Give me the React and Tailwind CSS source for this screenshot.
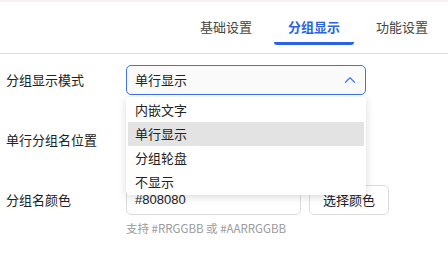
import { ChevronUp } from 'lucide-react';

const TABS = ['基础设置', '分组显示', '功能设置'];
const MODES = ['内嵌文字', '单行显示', '分组轮盘', '不显示'];

export default function App() {
  const font = { fontFamily: '"Noto Sans CJK SC", "Noto Sans", sans-serif' };

  return (
    <div className="w-[448px] h-[276px] bg-white text-[13px] text-[#222] overflow-hidden" style={font}>
      <div className="h-[2px] bg-[#f8eff2]" />

      {/* tabs */}
      <div className="h-[52px] flex justify-end gap-2 pr-[6px] border-b border-[#dedede]">
        {TABS.map(t => {
          const active = t === '分组显示';
          return (
            <div key={t} className="w-20 relative flex items-center justify-center pb-[10px] pt-[8px]">
              <span className={active ? 'font-bold text-[#2a62e6]' : 'text-[#444]'}>{t}</span>
              {active && <div className="absolute left-0 right-0 bottom-[8px] h-[3px] rounded-b-full bg-[#2a62e6]" />}
            </div>
          );
        })}
      </div>

      {/* form */}
      <div className="relative pl-[6px] pt-[11px] flex flex-col gap-[30px]">
        <div className="flex items-center">
          <div className="w-[120px]">分组显示模式</div>
          <div className="w-[240px] h-[30px] border border-[#3b74ea] rounded-[5px] bg-[#fafafa] flex items-center justify-between pl-[8px] pr-[6px]">
            <span>单行显示</span>
            <ChevronUp size={18} strokeWidth={1.8} className="text-[#4a7fea]" />
          </div>
        </div>

        <div className="flex items-center">
          <div className="w-[120px]">单行分组名位置</div>
          {/* covered by the open list */}
          <div className="w-[240px] h-[30px] border border-[#dcdcdc] rounded-[5px]" />
        </div>

        <div className="flex flex-col">
          <div className="flex items-center">
            <div className="w-[120px]">分组名颜色</div>
            <div className="w-[175px] h-[30px] border border-[#dcdcdc] rounded-[5px] flex items-center pl-[8px]" style={{ fontFamily: '"Liberation Sans", "Noto Sans CJK SC", sans-serif' }}>#808080</div>
            <button className="ml-[8px] w-[80px] h-[30px] border border-[#dcdcdc] rounded-[5px] bg-white flex items-center justify-center">选择颜色</button>
          </div>
          <div className="ml-[120px] mt-[5px] text-[11.5px] text-[#9a9a9a]">支持 #RRGGBB 或 #AARRGGBB</div>
        </div>

        {/* open dropdown */}
        <div className="absolute left-[126px] top-[43px] w-[240px] bg-white rounded-[4px] py-[1px] px-[2px] shadow-[0_2px_8px_rgba(0,0,0,0.15)]">
          {MODES.map(m => (
            <div key={m} className={'h-6 flex items-center pl-[7px] ' + (m === '单行显示' ? 'bg-[#e3e3e3]' : '')}>{m}</div>
          ))}
        </div>
      </div>
    </div>
  );
}
